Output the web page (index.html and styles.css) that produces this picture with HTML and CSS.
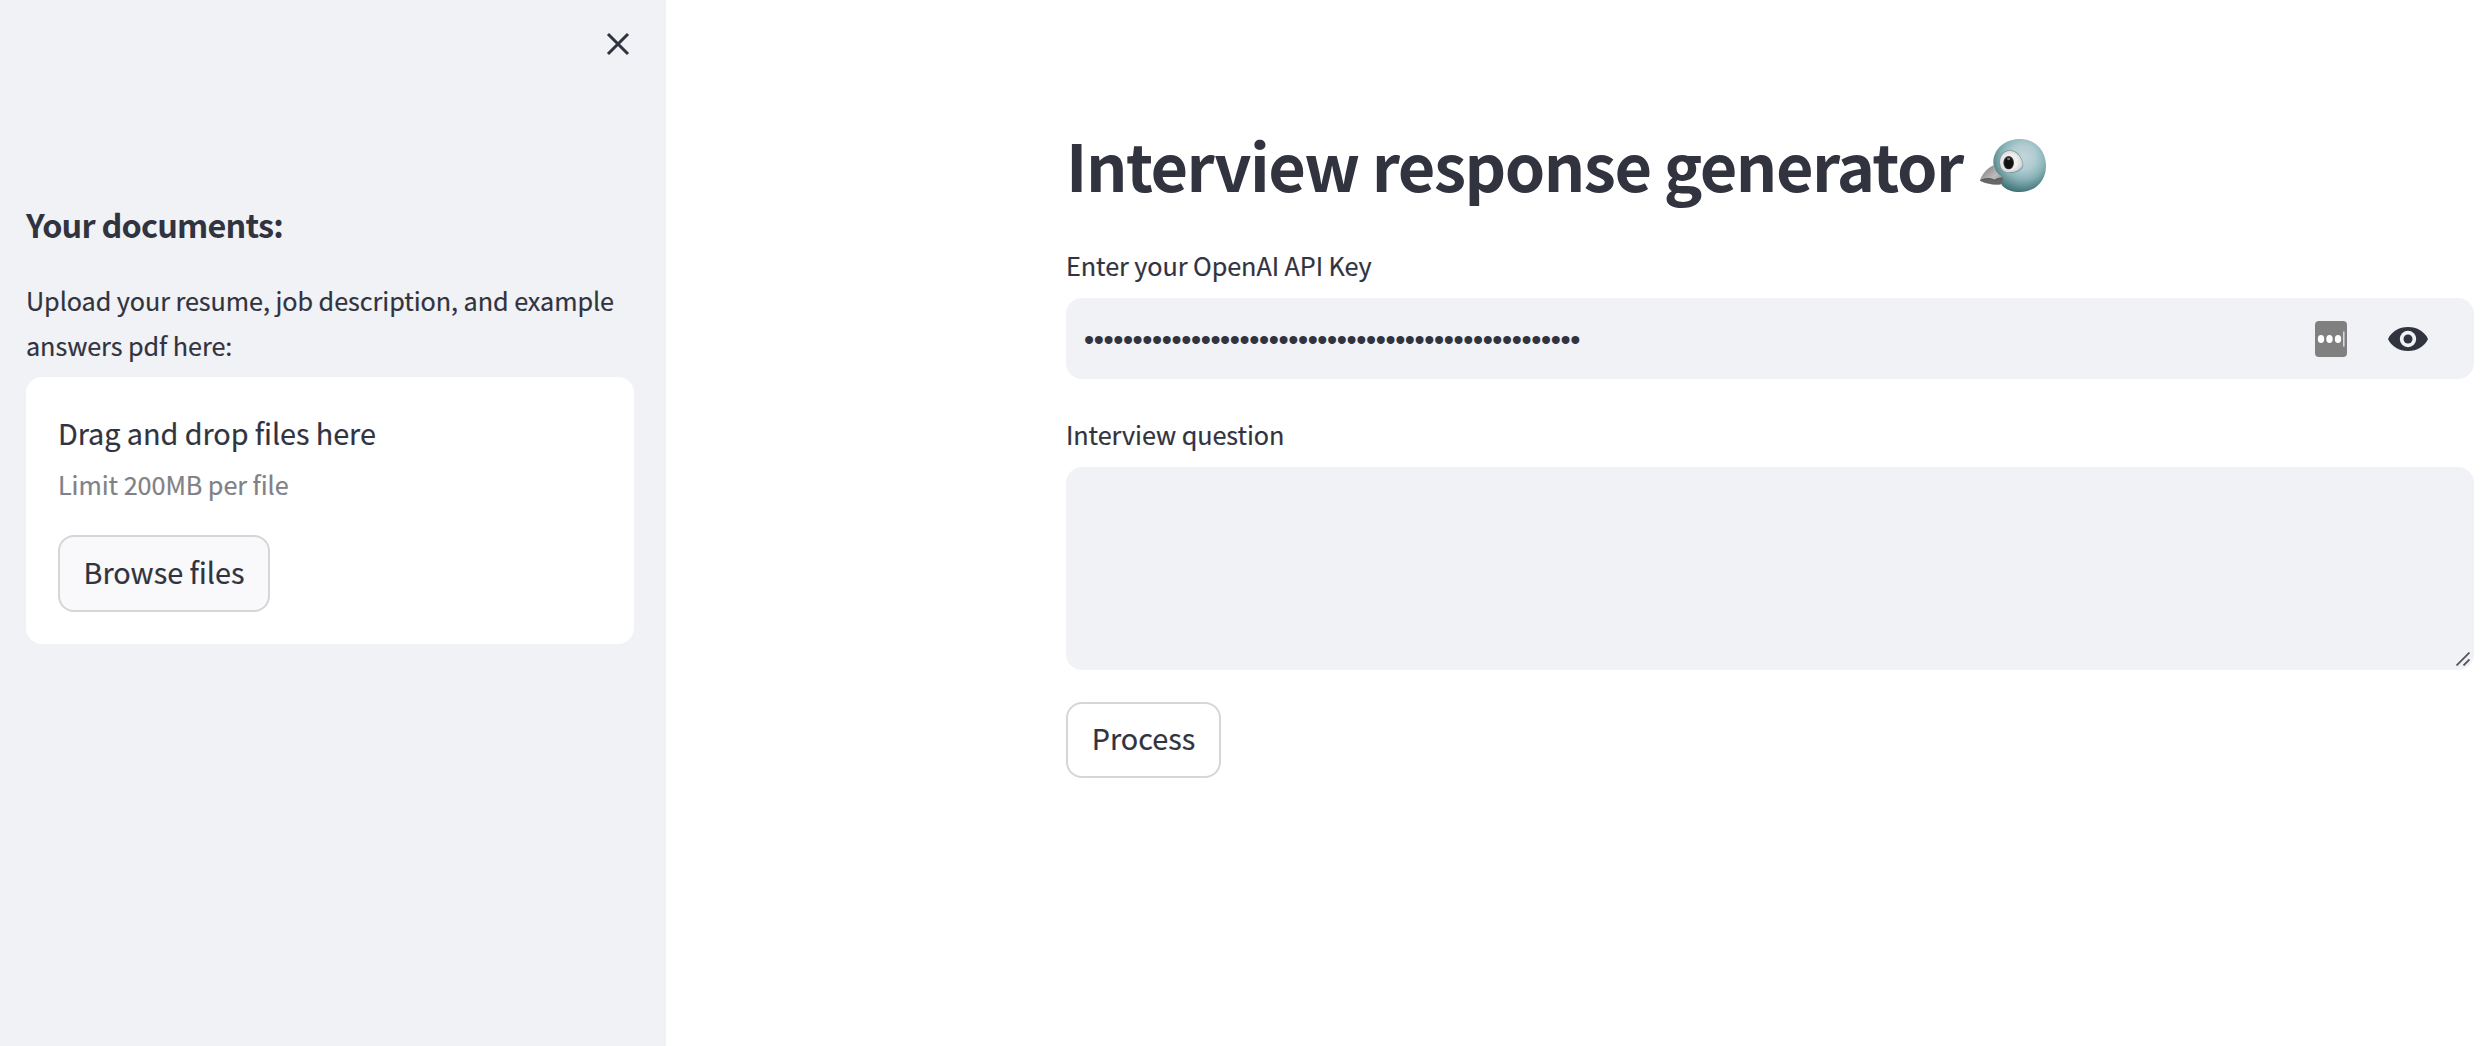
FILE: index.html
```html
<!DOCTYPE html>
<html lang="en">
<head>
<meta charset="utf-8">
<title>Interview response generator</title>
<link rel="stylesheet" href="styles.css">
</head>
<body>
<div class="app">
  <aside class="sidebar">
    <div class="sidebar-top">
      <svg class="close" viewBox="0 0 24 24"><path d="M2 2L22 22M22 2L2 22"/></svg>
    </div>
    <h2 class="sidebar-title">Your documents:</h2>
    <p class="upload-label">Upload your resume, job description, and example answers pdf here:</p>
    <section class="dropzone">
      <div class="drop-title">Drag and drop files here</div>
      <div class="drop-limit">Limit 200MB per file</div>
      <button class="button browse">Browse files</button>
    </section>
  </aside>
  <main class="main">
    <h1 class="title"><span class="title-text">Interview response generator</span>
      <svg class="bird" viewBox="54 51 210 174">
        <defs>
          <radialGradient id="head" gradientUnits="userSpaceOnUse" cx="190" cy="112" r="108">
            <stop offset="0" stop-color="#c3d5dc"/>
            <stop offset=".35" stop-color="#b0cbd1"/>
            <stop offset=".6" stop-color="#8bb5b9"/>
            <stop offset=".8" stop-color="#639295"/>
            <stop offset="1" stop-color="#3b6e73"/>
          </radialGradient>
          <linearGradient id="beak" x1="0" y1="0" x2="1" y2="1">
            <stop offset=".2" stop-color="#8a8a8b"/>
            <stop offset=".6" stop-color="#bdbdbe"/>
            <stop offset="1" stop-color="#777"/>
          </linearGradient>
          <radialGradient id="white" cx=".45" cy=".5" r=".6">
            <stop offset=".5" stop-color="#f1f0f0"/>
            <stop offset="1" stop-color="#c9cdce"/>
          </radialGradient>
        </defs>
        <path fill="url(#head)" d="M180 57C225 57 258 91 258 137C258 184 225 216 180 216C150 216 128 204 122 188C124 170 100 155 100 128C100 85 137 57 180 57Z"/>
        <path fill="#7d9b9e" d="M118 128C117 104 132 89 150 90C172 91 187 111 190 134C190 149 169 160 145 159C128 158 119 146 118 128Z"/>
        <path fill="url(#white)" d="M120 128C119 107 133 92 150 92C170 93 185 112 188 133C187 147 168 157 146 157C129 156 121 145 120 128Z"/>
        <path fill="url(#beak)" d="M100 136C82 144 65 164 60 181C70 190 102 196 122 193C131 182 128 171 119 165C110 159 104 149 100 136Z"/>
        <path fill="#68686a" d="M60 181C75 174 92 172 103 180C112 173 121 173 128 173C130 183 126 191 122 193C100 196 70 190 60 181Z"/>
        <path fill="none" stroke="#454547" stroke-width="2" d="M61 181C77 174 93 174 104 181C112 176 120 174 127 175"/>
        <ellipse cx="146" cy="128" rx="16" ry="20" fill="#3a3a3a"/>
        <ellipse cx="146" cy="129" rx="13" ry="17" fill="#101112"/>
        <ellipse cx="146" cy="117" rx="5" ry="3.5" fill="#74787a"/>
      </svg>
    </h1>
    <label class="label">Enter your OpenAI API Key</label>
    <div class="key-field">
      <span class="key-value">•••••••••••••••••••••••••••••••••••••••••••••••••••</span>
      <svg class="manager" viewBox="0 0 32 36">
        <rect width="32" height="36" rx="4" fill="#808080"/>
        <ellipse cx="6" cy="18" rx="3.2" ry="3.9" fill="#fff"/>
        <ellipse cx="14.5" cy="18" rx="3.2" ry="3.9" fill="#fff"/>
        <ellipse cx="23" cy="18" rx="3.2" ry="3.9" fill="#fff"/>
        <path d="M28.8 10.5V25.5" stroke="#e2e2e2" stroke-width="1.4"/>
      </svg>
      <svg class="eye" viewBox="0 0 40 24">
        <path fill="#31333f" d="M0 12C3.5 4.5 11 0 20 0S36.5 4.5 40 12C36.5 19.5 29 24 20 24S3.5 19.5 0 12Z"/>
        <circle cx="20" cy="12" r="8.2" fill="#f0f2f6"/>
        <circle cx="20" cy="12" r="4.5" fill="#31333f"/>
      </svg>
    </div>
    <label class="label question-label">Interview question</label>
    <div class="question-field">
      <svg class="grip" viewBox="0 0 14 14"><path d="M.5 13.5L13.5 .5M7.5 13.5L13.5 7.5"/></svg>
    </div>
    <button class="button process">Process</button>
  </main>
</div>
</body>
</html>
```
FILE: styles.css
```css
* { box-sizing: border-box; }

body {
  margin: 0;
  background: #fff;
  color: #31333f;
  font-family: "Noto Sans CJK JP", "Noto Sans", sans-serif;
  font-size: 25.2px;
  letter-spacing: -0.06px;
  -webkit-text-stroke: 0.2px currentColor;
}

h1, h2, p { margin: 0; }

svg { display: block; flex: none; }

.app { display: flex; height: 1046px; overflow: hidden; }

.sidebar {
  flex: none;
  width: 666px;
  padding: 0 32px 0 26px;
  background: #f0f2f6;
}

.sidebar-top {
  display: flex;
  justify-content: flex-end;
  height: 202px;
  padding: 32px 4px 0 0;
}

.close {
  width: 24px;
  height: 24px;
  fill: none;
  stroke: #31333f;
  stroke-width: 3.1;
}

.sidebar-title {
  font-size: 32.4px;
  font-weight: 700;
  line-height: 44px;
  letter-spacing: -0.78px;
  -webkit-text-stroke: 0;
}

.upload-label { margin: 32px 0 9px; line-height: 45px; }

.dropzone {
  height: 267px;
  padding: 33px 32px 32px;
  border-radius: 16px;
  background: #fff;
}

.drop-title { font-size: 28.8px; line-height: 46px; }

.drop-limit { margin: 8px 0 31px; line-height: 40px; color: #808187; }

.button {
  display: block;
  border: 2px solid #d6d6d9;
  border-radius: 16px;
  background: #fff;
  color: inherit;
  font-family: inherit;
  font-size: 28.8px;
  line-height: 40px;
  text-align: center;
}

.browse { width: 212px; height: 77px; padding: 0 0 4px; background: #f9f9fb; }

.dropzone .button { margin-left: 0; }

.main { flex: 1; padding: 121px 8px 0 400px; }

.title {
  display: flex;
  height: 85px;
  font-size: 64.8px;
  font-weight: 700;
  line-height: 86px;
  letter-spacing: -1.5px;
  white-space: nowrap;
  -webkit-text-stroke: 0;
}

.bird { width: 70px; height: 58px; margin: 16px 0 0 15px; }

.label { display: block; margin: 37px 0 11px; line-height: 44px; }

.key-field {
  display: flex;
  align-items: center;
  height: 81px;
  padding: 0 46px 0 18px;
  border-radius: 16px;
  background: #f0f2f6;
}

.key-value {
  flex: 1;
  padding-top: 3px;
  font-family: "Liberation Sans", sans-serif;
  font-size: 29px;
  line-height: 40px;
  letter-spacing: -0.43px;
  -webkit-text-stroke: 0;
}

.manager { width: 32px; height: 36px; margin-right: 41px; }

.eye { width: 40px; height: 24px; }

.question-label { margin-top: 33px; }

.question-field {
  position: relative;
  height: 203px;
  border-radius: 16px;
  background: #f0f2f6;
}

.grip {
  position: absolute;
  right: 4px;
  bottom: 4px;
  width: 14px;
  height: 14px;
  fill: none;
  stroke: #55565c;
  stroke-width: 1.8;
}

.process { width: 155px; height: 76px; margin-top: 32px; padding: 0 0 4px; }
```
